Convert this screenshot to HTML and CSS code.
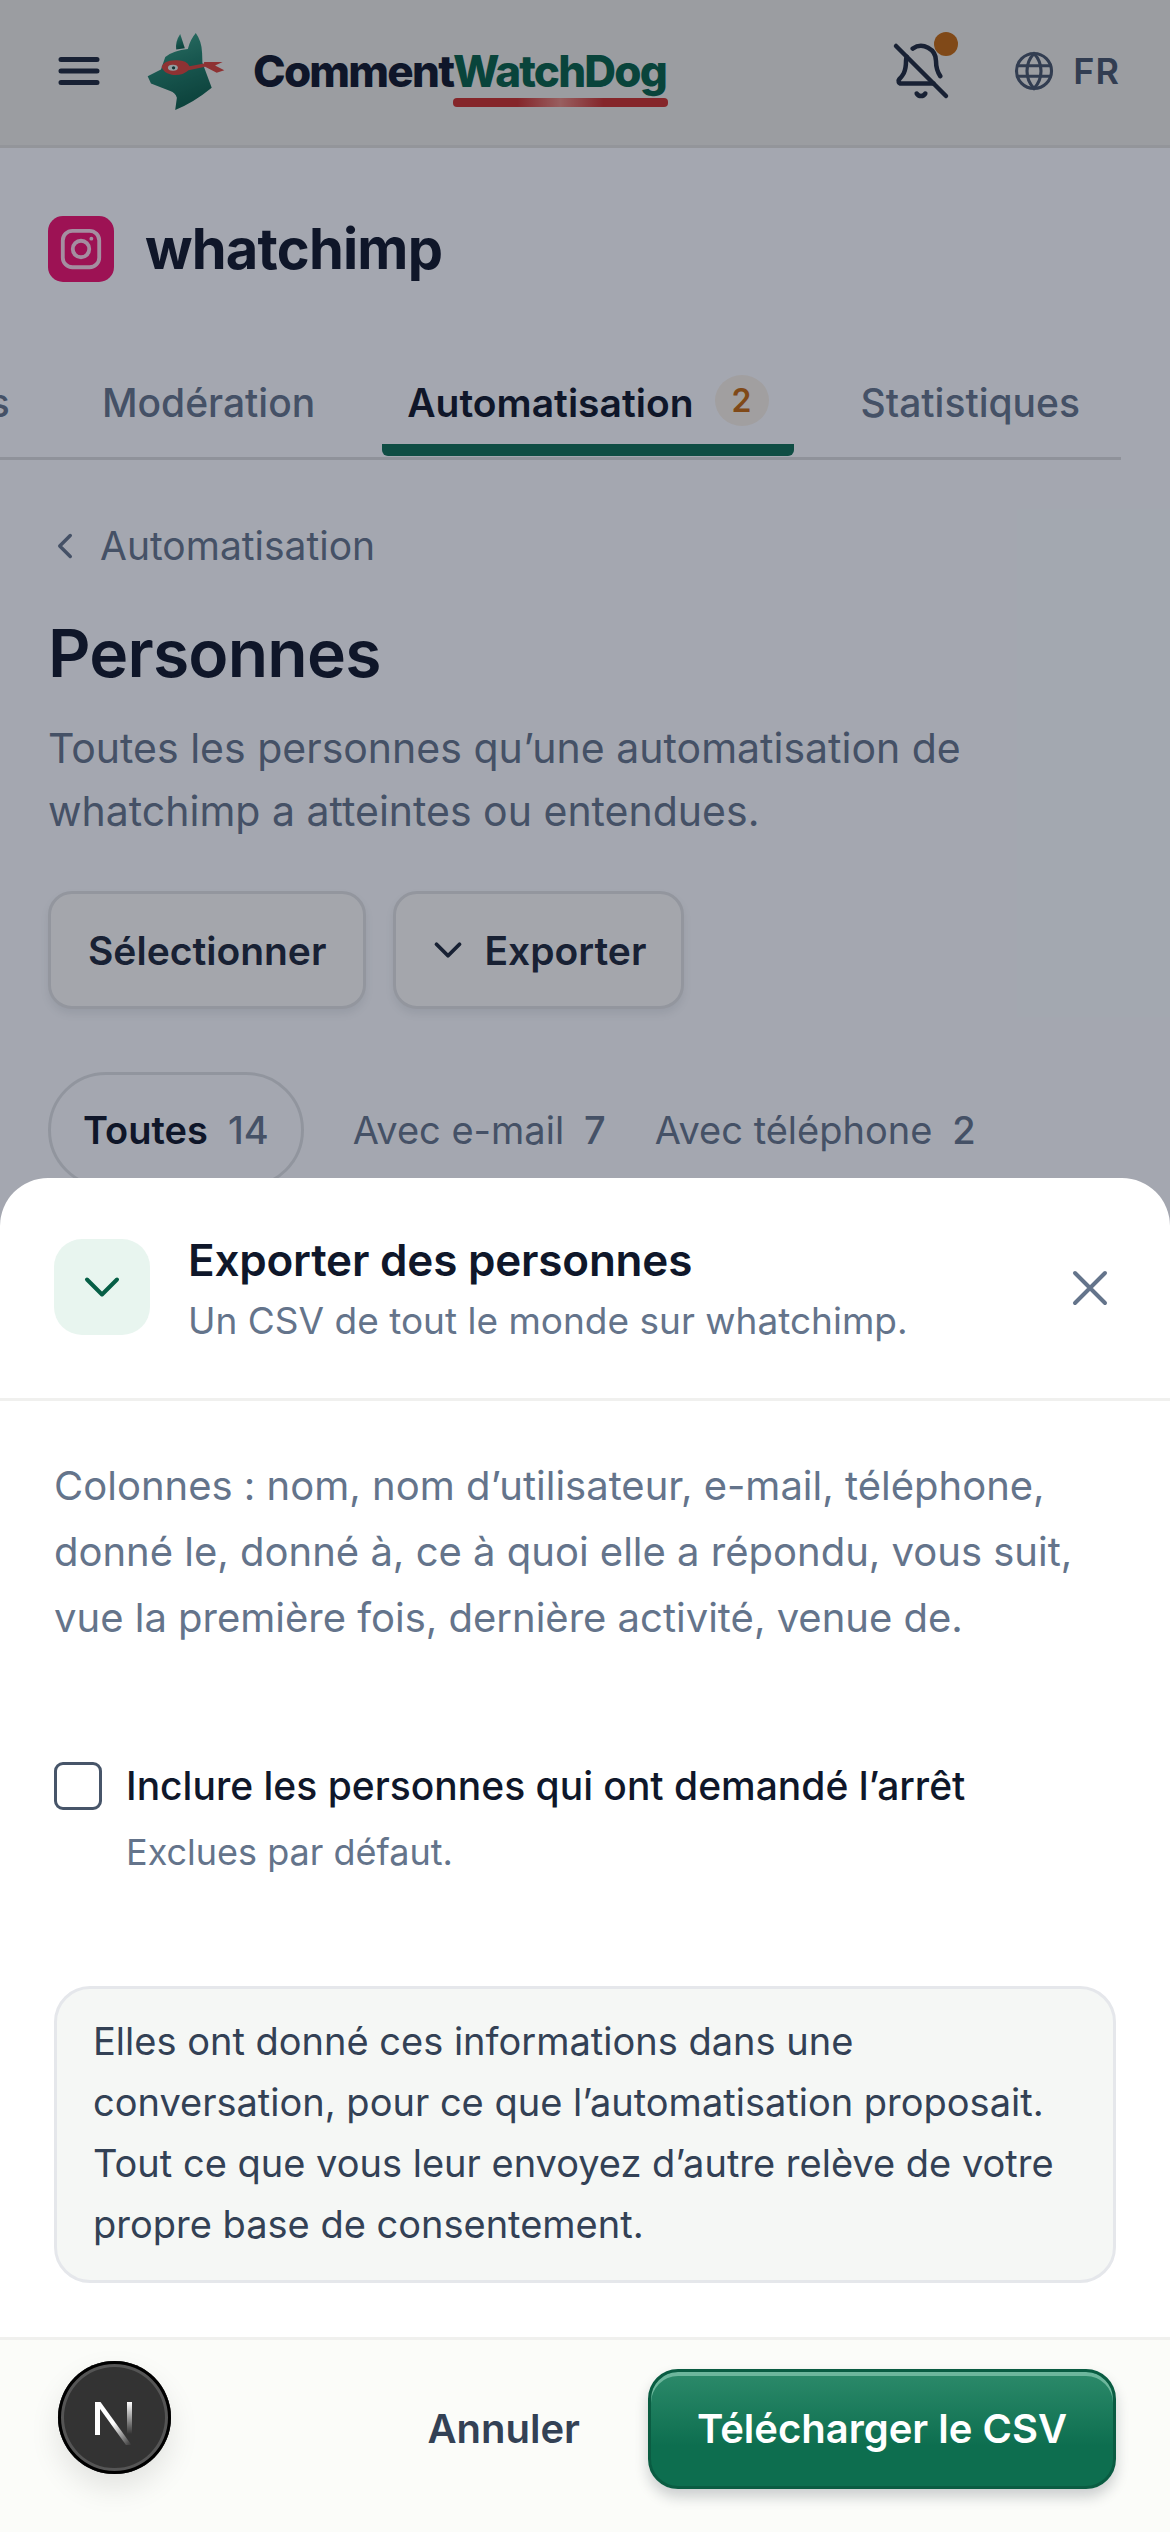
FILE: index.html
```html
<!DOCTYPE html>
<html lang="fr">
<head>
    <meta charset="UTF-8">
    <meta name="viewport" content="width=device-width, initial-scale=1.0">
    <title>Exporter des personnes</title>
    <link rel="stylesheet" href="styles.css">
</head>
<body>
    <div class="page">
        <header class="topbar">
            <svg class="menu-icon" viewBox="0 0 42 28" fill="none" stroke="currentColor" stroke-width="5" stroke-linecap="round">
                <path d="M3 2.5h36M3 14h36M3 25.5h36"/>
            </svg>
            <svg class="logo" viewBox="80 40 235 232">
                <defs>
                    <linearGradient id="fur" x1="0" y1="0" x2="0.3" y2="1">
                        <stop offset="0" stop-color="#3fa88a"/>
                        <stop offset="0.5" stop-color="#1f7f68"/>
                        <stop offset="1" stop-color="#0c5f4a"/>
                    </linearGradient>
                </defs>
                <path fill="url(#fur)" d="M180 43 L194 86 L168 90 Q165 65 180 43Z"/>
                <path fill="url(#fur)" d="M227 40 Q245 65 246 100 L247 130 L275 205 Q220 250 165 272 L170 235 Q165 220 150 215 L92 192 L82 170 L122 150 L135 112 Q160 92 203 88 Q210 60 227 40Z"/>
                <path fill="#d8433a" d="M124 142 Q130 122 165 122 Q200 120 208 140 L252 132 L252 127 L308 127 L285 138 L313 152 L290 160 L255 142 L205 152 Q185 170 155 166 Q128 160 124 142Z"/>
                <ellipse cx="158" cy="145" rx="15" ry="9" fill="#dfeee9"/>
                <circle cx="160" cy="145" r="5" fill="#12433a"/>
            </svg>
            <span class="brand">Comment<span class="brand-accent">WatchDog</span></span>
            <div class="topbar-right">
                <span class="bell">
                    <svg class="icon-60" viewBox="0 0 24 24" fill="none" stroke="currentColor" stroke-width="1.8" stroke-linecap="round" stroke-linejoin="round">
                        <path d="M10.268 21a2 2 0 0 0 3.464 0"/>
                        <path d="M17 17H4a1 1 0 0 1-.74-1.673C4.59 13.956 6 12.499 6 8a6 6 0 0 1 .258-1.742"/>
                        <path d="m2 2 20 20"/>
                        <path d="M8.668 3.01A6 6 0 0 1 18 8c0 2.687.77 4.653 1.707 6.05"/>
                    </svg>
                    <span class="bell-dot"></span>
                </span>
                <span class="lang">
                    <svg class="globe" viewBox="0 0 24 24" fill="none" stroke="currentColor" stroke-width="1.8" stroke-linecap="round">
                        <circle cx="12" cy="12" r="10"/>
                        <path d="M12 2a14.5 14.5 0 0 0 0 20 14.5 14.5 0 0 0 0-20"/>
                        <path d="M2.6 9h18.8M2.6 15h18.8"/>
                    </svg>
                    FR
                </span>
            </div>
        </header>

        <main>
            <div class="account">
                <span class="insta">
                    <svg viewBox="0 0 24 24" fill="none" stroke="currentColor" stroke-width="2" stroke-linecap="round">
                        <rect x="2.5" y="2.5" width="19" height="19" rx="5"/>
                        <circle cx="12" cy="12" r="4.3"/>
                        <path d="M17.4 6.6h.01"/>
                    </svg>
                </span>
                <h1 class="account-name">whatchimp</h1>
            </div>

            <nav class="tabs">
                <a class="tab">Commentaires</a>
                <a class="tab">Modération</a>
                <a class="tab tab-active">Automatisation <span class="tab-badge">2</span></a>
                <a class="tab">Statistiques</a>
            </nav>

            <div class="content">
                <a class="back">
                    <svg class="back-icon" viewBox="0 0 24 24" fill="none" stroke="currentColor" stroke-width="2" stroke-linecap="round" stroke-linejoin="round">
                        <path d="m15 18-6-6 6-6"/>
                    </svg>
                    Automatisation
                </a>
                <h2 class="page-title">Personnes</h2>
                <p class="page-lead">Toutes les personnes qu’une automatisation de whatchimp a atteintes ou entendues.</p>

                <div class="actions">
                    <button class="btn">Sélectionner</button>
                    <button class="btn btn-export">
                        <svg class="btn-icon" viewBox="0 0 24 24" fill="none" stroke="currentColor" stroke-width="2" stroke-linecap="round" stroke-linejoin="round">
                            <path d="m6 9 6 6 6-6"/>
                        </svg>
                        Exporter
                    </button>
                </div>

                <div class="chips">
                    <span class="chip chip-active">Toutes <b>14</b></span>
                    <span class="chip">Avec e-mail <b>7</b></span>
                    <span class="chip">Avec téléphone <b>2</b></span>
                </div>
            </div>
        </main>
    </div>

    <div class="overlay"></div>

    <section class="sheet">
        <div class="sheet-head">
            <span class="sheet-icon">
                <svg class="icon-60" viewBox="0 0 24 24" fill="none" stroke="currentColor" stroke-width="1.6" stroke-linecap="round" stroke-linejoin="round">
                    <path d="m6 9 6 6 6-6"/>
                </svg>
            </span>
            <div class="sheet-titles">
                <h3 class="sheet-title">Exporter des personnes</h3>
                <p class="sheet-sub">Un CSV de tout le monde sur whatchimp.</p>
            </div>
            <svg class="sheet-close icon-60" viewBox="0 0 24 24" fill="none" stroke="currentColor" stroke-width="1.6" stroke-linecap="round" stroke-linejoin="round">
                <path d="M18 6 6 18M6 6l12 12"/>
            </svg>
        </div>

        <div class="sheet-body">
            <p class="columns">Colonnes : nom, nom d’utilisateur, e-mail, téléphone, donné le, donné à, ce à quoi elle a répondu, vous suit, vue la première fois, dernière activité, venue de.</p>

            <label class="check">
                <span class="check-box"></span>
                <span class="check-label">Inclure les personnes qui ont demandé l’arrêt</span>
            </label>
            <p class="check-hint">Exclues par défaut.</p>

            <div class="note">Elles ont donné ces informations dans une conversation, pour ce que l’automatisation proposait. Tout ce que vous leur envoyez d’autre relève de votre propre base de consentement.</div>
        </div>

        <div class="sheet-foot">
            <button class="btn-cancel">Annuler</button>
            <button class="btn-primary">Télécharger le CSV</button>
        </div>

        <span class="dev-badge">
            <svg viewBox="0 0 113 113" width="113" height="113" fill="none">
                <defs>
                    <linearGradient id="fade-a" x1="0" y1="0" x2="1" y2="1">
                        <stop offset="0.5" stop-color="#fff"/>
                        <stop offset="1" stop-color="#fff" stop-opacity="0"/>
                    </linearGradient>
                    <linearGradient id="fade-b" x1="0" y1="0" x2="0" y2="1">
                        <stop offset="0" stop-color="#fff"/>
                        <stop offset="1" stop-color="#fff" stop-opacity="0"/>
                    </linearGradient>
                </defs>
                <path d="M37 41h5v33h-5z" fill="#fff"/>
                <path d="M37 41h5.500l31 43h-5.500z" fill="url(#fade-a)"/>
                <path d="M69 41h5v32h-5z" fill="url(#fade-b)"/>
            </svg>
        </span>
    </section>
</body>
</html>
```

FILE: styles.css
```css
* {
    box-sizing: border-box;
}
html, body {
    margin: 0;
    width: 1170px;
    height: 2532px;
    overflow: hidden;
}
body {
    position: relative;
    font-family: Inter, "Noto Sans", sans-serif;
    color: #0f172a;
}
h1, h2, h3, p {
    margin: 0;
}
button {
    font-family: inherit;
    cursor: pointer;
}

.page {
    height: 2532px;
    background: #fafcff;
}

/* top bar */
.topbar {
    display: flex;
    align-items: center;
    height: 148px;
    padding: 0 50px 3px 58px;
    background: #ecede8;
    border-bottom: 3px solid #dfe0dc;
    color: #1e293b;
}
.menu-icon {
    width: 42px;
    height: 28px;
    flex: none;
}
.logo {
    width: 78px;
    height: 77px;
    margin-left: 47px;
    flex: none;
}
.brand {
    margin-left: 28px;
    font-size: 44px;
    font-weight: 800;
    letter-spacing: -1.8px;
    color: #0f172a;
}
.brand-accent {
    position: relative;
    color: #065f46;
}
.brand-accent::after {
    content: "";
    position: absolute;
    left: 0;
    right: -2px;
    bottom: -9px;
    height: 9px;
    border-radius: 4px;
    background: linear-gradient(90deg, #c9302c, #c9302c 30%, #e88a80 50%, #c9302c 70%, #c9302c);
}
.topbar-right {
    display: flex;
    align-items: center;
    margin-left: auto;
    color: #475569;
}
.icon-60 {
    width: 60px;
    height: 60px;
    flex: none;
}
.bell {
    position: relative;
    display: flex;
    margin-right: 62px;
    color: #1e293b;
}
.bell-dot {
    position: absolute;
    top: -9px;
    right: -7px;
    width: 24px;
    height: 24px;
    border-radius: 50%;
    background: #c2680f;
}
.lang {
    display: flex;
    align-items: center;
    gap: 18px;
    font-size: 36px;
    font-weight: 600;
    letter-spacing: 1px;
}
.globe {
    width: 42px;
    height: 42px;
}

/* account */
.account {
    display: flex;
    align-items: center;
    gap: 31px;
    padding: 68px 48px 0;
}
.insta {
    display: flex;
    align-items: center;
    justify-content: center;
    width: 66px;
    height: 66px;
    border-radius: 15px;
    background: #f0106e;
    color: #fbd5e6;
}
.insta svg {
    width: 46px;
    height: 46px;
}
.account-name {
    font-size: 56px;
    font-weight: 700;
    letter-spacing: -0.8px;
    line-height: 66px;
}

/* tabs */
.tabs {
    display: flex;
    justify-content: flex-end;
    gap: 42px;
    width: 1121px;
    height: 89px;
    margin-top: 89px;
    border-bottom: 3px solid #d9dbdd;
    overflow: hidden;
    padding-right: 16px;
}
.tab {
    flex: none;
    display: flex;
    align-items: flex-start;
    gap: 21px;
    height: 85px;
    padding: 8px 25px 0;
    font-size: 39px;
    font-weight: 500;
    color: #64748b;
    border-bottom: 0 solid transparent;
}
.tab-active {
    font-weight: 600;
    color: #0f172a;
    border-bottom: 12px solid #0f6e55;
    border-radius: 0 0 6px 6px;
}
.tab-badge {
    display: flex;
    align-items: center;
    justify-content: center;
    width: 54px;
    height: 51px;
    margin-top: -4px;
    border-radius: 50%;
    background: #f6efe6;
    font-size: 32px;
    color: #c2680f;
}

/* page content */
.content {
    padding: 0 48px;
}
.back {
    display: flex;
    align-items: center;
    gap: 14px;
    margin-top: 62px;
    margin-left: -4px;
    font-size: 39px;
    font-weight: 400;
    color: #64748b;
}
.back-icon {
    width: 42px;
    height: 42px;
}
.page-title {
    margin-top: 44px;
    font-size: 66px;
    line-height: 80px;
    font-weight: 600;
    letter-spacing: -0.8px;
}
.page-lead {
    margin-top: 24px;
    font-size: 41px;
    line-height: 63px;
    color: #64748b;
}
.actions {
    display: flex;
    gap: 27px;
    margin-top: 48px;
}
.btn {
    display: flex;
    align-items: center;
    height: 118px;
    padding: 0 37px;
    border: 3px solid #dfe1e3;
    border-radius: 24px;
    background: #fbfbf9;
    box-shadow: 0 5px 8px rgba(15, 23, 42, 0.08);
    font-size: 39px;
    font-weight: 600;
    color: #1e293b;
}
.btn-export {
    gap: 24px;
    padding: 0 35px 0 40px;
}
.btn-icon {
    width: 46px;
    height: 46px;
    margin: 0 -11px;
}
.chips {
    display: flex;
    gap: 49px;
    margin-top: 63px;
}
.chip {
    display: flex;
    align-items: center;
    height: 116px;
    gap: 20px;
    font-size: 38px;
    color: #64748b;
}
.chip b {
    font-weight: 500;
}
.chip-active {
    padding: 0 32px;
    border: 3px solid #dde0e3;
    border-radius: 58px;
    font-weight: 600;
    color: #0f172a;
}
.chip-active b {
    color: #64748b;
}

.overlay {
    position: absolute;
    inset: 0;
    background: rgba(15, 23, 42, 0.37);
}

/* bottom sheet */
.sheet {
    position: absolute;
    left: 0;
    right: 0;
    bottom: 0;
    display: flex;
    flex-direction: column;
    height: 1354px;
    border-radius: 48px 48px 0 0;
    background: #fff;
}
.sheet-head {
    display: flex;
    align-items: center;
    height: 223px;
    padding: 0 54px;
    border-bottom: 3px solid #f0f0ee;
    flex: none;
}
.sheet-icon {
    display: flex;
    align-items: center;
    justify-content: center;
    width: 96px;
    height: 96px;
    margin-top: -2px;
    border-radius: 28px;
    background: #e8f5ef;
    color: #065f46;
}
.sheet-titles {
    margin-left: 38px;
}
.sheet-title {
    font-size: 44px;
    line-height: 60px;
    font-weight: 600;
    letter-spacing: -0.2px;
}
.sheet-sub {
    margin-top: 6px;
    font-size: 37px;
    line-height: 50px;
    color: #64748b;
}
.sheet-close {
    margin-left: auto;
    margin-right: -4px;
    color: #64748b;
}
.sheet-body {
    flex: 1;
    padding: 52px 54px 0;
}
.columns {
    font-size: 40px;
    line-height: 66px;
    color: #64748b;
}
.check {
    display: flex;
    align-items: center;
    gap: 24px;
    margin-top: 105px;
}
.check-box {
    flex: none;
    width: 48px;
    height: 48px;
    border: 3px solid #475569;
    border-radius: 9px;
    background: #fff;
}
.check-label {
    font-size: 39px;
    line-height: 60px;
    font-weight: 500;
}
.check-hint {
    margin: 9px 0 0 72px;
    font-size: 36px;
    line-height: 54px;
    color: #64748b;
}
.note {
    margin-top: 107px;
    padding: 22px 36px 25px;
    border: 3px solid #e5e7eb;
    border-radius: 36px;
    background: #f5f7f5;
    font-size: 38px;
    line-height: 61px;
    color: #334155;
}
.sheet-foot {
    display: flex;
    align-items: center;
    justify-content: flex-end;
    gap: 68px;
    height: 195px;
    padding: 0 54px 15px;
    border-top: 3px solid #f0f0ee;
    background: #fbfcf9;
    flex: none;
}
.btn-cancel {
    padding: 0;
    border: 0;
    background: none;
    font-size: 40px;
    font-weight: 600;
    color: #334155;
}
.btn-primary {
    width: 468px;
    height: 120px;
    border: 3px solid #0a5c42;
    border-radius: 30px;
    background: linear-gradient(#2f8a6b, #11755400 0), linear-gradient(#2c8a6a, #0d6e4f 65%);
    box-shadow: inset 0 4px 0 #6db69c, 0 8px 14px rgba(15, 23, 42, 0.2);
    font-size: 40px;
    font-weight: 600;
    color: #fff;
}
.dev-badge {
    position: absolute;
    left: 58px;
    bottom: 58px;
    width: 113px;
    height: 113px;
    border-radius: 50%;
    background: #333;
    box-shadow: inset 0 0 0 3px #000, inset 0 0 0 6px #555, 0 14px 30px rgba(0, 0, 0, 0.1);
}
.dev-badge svg {
    display: block;
}
```
